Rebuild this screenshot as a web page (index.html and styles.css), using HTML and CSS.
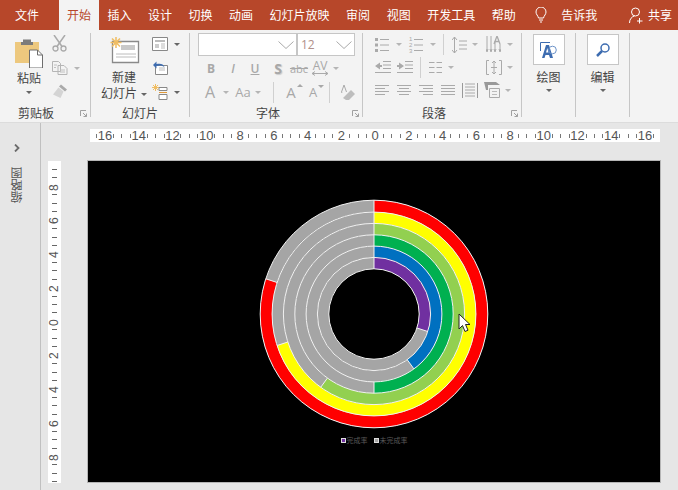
FILE: index.html
```html
<!DOCTYPE html>
<html lang="zh-CN">
<head>
  <meta charset="UTF-8">
  <title>PowerPoint</title>
  <link rel="stylesheet" href="styles.css">
</head>
<body>
  <svg class="defs" width="0" height="0">
    <symbol id="launcher" viewBox="0 0 7 7"><path d="M.5 6V.5H6M3 3l3.500 3.500M6.500 3.500v3h-3" stroke="#a0a0a0" fill="none"/></symbol>
  </svg>

  <div class="tabs">
    <div class="tab tab-file">文件</div>
    <div class="tab active">开始</div>
    <div class="tab">插入</div>
    <div class="tab">设计</div>
    <div class="tab">切换</div>
    <div class="tab">动画</div>
    <div class="tab">幻灯片放映</div>
    <div class="tab">审阅</div>
    <div class="tab">视图</div>
    <div class="tab">开发工具</div>
    <div class="tab">帮助</div>
    <div class="tell">
      <svg width="12" height="16" viewBox="0 0 12 16"><path d="M3.500 11C3 8.500 1 7.500 1 5a5 5 0 0 1 10 0c0 2.500-2 3.500-2.500 6zM4 13h4M5 15h2" fill="none" stroke="#fff"/></svg>
      <span>告诉我</span>
    </div>
    <div class="share">
      <svg width="15" height="17" viewBox="0 0 15 17"><circle cx="6.500" cy="5" r="4" fill="none" stroke="#fff"/><path d="M.5 16c0-4 2.500-6.500 5-7M10.500 11v5.500M8 14h5.500" fill="none" stroke="#fff"/></svg>
      <span>共享</span>
    </div>
  </div>

  <div class="ribbon">
    <div class="group g-clip">
      <div class="group-body clip-body">
        <div class="big-tool paste">
          <svg width="28" height="30" viewBox="0 0 28 30">
            <path d="M0 4h24v21H0z" fill="#edc87e"/>
            <path d="M8 4V1.500h8V4h2v3H6V4z" fill="#7b7b7b"/>
            <path d="M14.500 12h8l5 5v13h-13z" fill="#fff" stroke="#6e6e6e"/>
            <path d="M22.500 12v5h5" fill="none" stroke="#6e6e6e"/>
          </svg>
          <span class="big-label">粘贴</span>
          <i class="arr"></i>
        </div>
        <div class="clip-side">
          <svg width="15" height="17" viewBox="0 0 15 17"><circle cx="3.500" cy="13.500" r="2.500" fill="none" stroke="#aaa" stroke-width="1.300"/><circle cx="11.500" cy="13.500" r="2.500" fill="none" stroke="#aaa" stroke-width="1.300"/><path d="M2 0l8 11.500M13 0L5 11.500" stroke="#aaa" stroke-width="1.500"/></svg>
          <div class="with-arr">
            <svg width="16" height="14" viewBox="0 0 16 14"><path d="M.5.5h6l2 2v8h-8zM6 4.500h6l3 3v6H6z" fill="#f3f3f3" stroke="#b5b5b5"/><path d="M2 4h3M2 6.500h2M8 9h5M8 11h5" stroke="#c0c0c0"/></svg>
            <i class="arr light"></i>
          </div>
          <svg width="16" height="15" viewBox="0 0 16 15"><path d="M9 .5l6 5-2 2-6-5z" fill="#aaa"/><path d="M6.500 3.500l5 4-3 6.500-7.500-3.500z" fill="#d4d4d4"/></svg>
        </div>
      </div>
      <div class="group-label label-clip">剪贴板<svg class="launcher"><use href="#launcher"/></svg></div>
    </div>

    <div class="group g-slides">
      <div class="group-body slides-body">
        <div class="big-tool new-slide">
          <svg width="31" height="28" viewBox="0 0 31 28">
            <path d="M3.500 5.500h26v21h-26z" fill="#fff" stroke="#8a8a8a" stroke-width="1.300"/>
            <path d="M12 9h14v5H12z" fill="#c9c9c9"/>
            <path d="M7 18h20M7 21h20" stroke="#bcbcbc"/>
            <path d="M7 1v11M1.500 6.500h11M3 2.500l8 8M11 2.500l-8 8" stroke="#f0bd62" stroke-width="1.500"/>
          </svg>
          <span class="big-label">新建</span>
          <span class="big-label second">幻灯片<i class="arr inline"></i></span>
        </div>
        <div class="slides-side">
          <div class="with-arr">
            <svg width="16" height="14" viewBox="0 0 16 14"><path d="M.5.500h15v13H.5z" fill="#fff" stroke="#888"/><path d="M3 3h10v2H3z" fill="#bbb"/><path d="M3 7h4v4H3z" fill="#ccc"/><path d="M9 7h4M9 9h4M9 11h4" stroke="#bbb"/></svg>
            <i class="arr"></i>
          </div>
          <svg class="reset" width="16" height="15" viewBox="0 0 16 15"><path d="M3.500 5.500h12v9H3.500z" fill="#fff" stroke="#888"/><path d="M7 8h6M7 10h6" stroke="#bbb"/><path d="M1 5l3.500-3.500V4c4-1 7 0 8 3-2-1.500-4.500-2-8-1v2.500z" fill="#3d6cb0"/></svg>
          <div class="with-arr">
            <svg width="16" height="16" viewBox="0 0 16 16"><path d="M7 3.500h8v3H7zM7 10.500h8v5H7z" fill="#fff" stroke="#888"/><path d="M7 8.500h8" stroke="#e09a3a"/><path d="M3.500 0v7M0 3.500h7M1 1l5 5M6 1L1 6" stroke="#f0bd62"/></svg>
            <i class="arr"></i>
          </div>
        </div>
      </div>
      <div class="group-label">幻灯片</div>
    </div>

    <div class="group g-font">
      <div class="group-body font-body">
        <div class="font-boxes">
          <div class="combo combo-name"><svg width="16" height="8" viewBox="0 0 16 8"><path d="M.5.5L8 7.500 15.500.5" fill="none" stroke="#aaa"/></svg></div>
          <div class="combo combo-size"><span>12</span><svg width="16" height="8" viewBox="0 0 16 8"><path d="M.5.5L8 7.500 15.500.5" fill="none" stroke="#aaa"/></svg></div>
        </div>
        <div class="font-row row-style">
          <span class="glyph w-b">B</span>
          <span class="glyph w-i">I</span>
          <span class="glyph w-u">U</span>
          <span class="glyph w-s">S</span>
          <span class="glyph w-abc">abc</span>
          <span class="av"><b>AV</b><svg width="16" height="5" viewBox="0 0 16 5"><path d="M0 2.500h16M3 .5l-3 2 3 2M13 .5l3 2-3 2" fill="none" stroke="#aaa"/></svg></span>
          <i class="arr light"></i>
        </div>
        <div class="font-row row-size">
          <span class="glyph big-a">A</span><i class="arr light"></i>
          <span class="glyph case">Aa</span><i class="arr light"></i>
          <span class="v-sep sep-a"></span>
          <span class="glyph grow">A<em class="up"></em></span>
          <span class="glyph shrink">A<em class="down"></em></span>
          <span class="v-sep sep-b"></span>
          <svg class="eraser" width="15" height="17" viewBox="0 0 15 17"><path d="M2 9L1.500 8 4 1l2.500 7" fill="none" stroke="#aaa"/><path d="M3 14l8-8 4 4-6 6H6z" fill="#bdbdbd"/></svg>
        </div>
      </div>
      <div class="group-label label-font">字体<svg class="launcher"><use href="#launcher"/></svg></div>
    </div>

    <div class="group g-para">
      <div class="group-body para-body">
        <div class="para-row">
          <svg width="14" height="14" viewBox="0 0 14 14"><path d="M5 1.500h9M5 7h9M5 12.500h9" stroke="#aaa"/><path d="M0 0h3v3H0zM0 5.500h3v3H0zM0 11h3v3H0z" fill="#aaa"/></svg>
          <i class="arr light gap-7"></i>
          <span class="nums"><span>1<br>2<br>3</span><svg width="9" height="14" viewBox="0 0 9 14"><path d="M0 1.500h9M0 7h9M0 12.500h9" stroke="#aaa"/></svg></span>
          <i class="arr light gap-7"></i>
          <span class="v-sep sep-c"></span>
          <svg class="linesp" width="15" height="18" viewBox="0 0 15 18"><path d="M2.500 1v16M0 4l2.500-3L5 4M0 14l2.500 3L5 14" fill="none" stroke="#aaa"/><path d="M7 5h8M7 9h8M7 13h8" stroke="#aaa"/></svg>
          <i class="arr light gap-5"></i>
          <svg class="txtdir" width="15" height="17" viewBox="0 0 15 17"><path d="M1 0v15M5 0v15M9 5v10M0 13l1 3 1-3M4 13l1 3 1-3M8 13l1 3 1-3M14 8v7M13 13l1 3 1-3" fill="none" stroke="#aaa"/><path d="M8 8l3-8 3 8M9 5.500h4" fill="none" stroke="#aaa" stroke-width="1.300"/></svg>
          <i class="arr light gap-6"></i>
        </div>
        <div class="para-row">
          <svg width="16" height="12" viewBox="0 0 16 12"><path d="M8 .5h8M8 4h8M8 7.500h8M0 11.500h16" stroke="#aaa"/><path d="M0 5l5-3.500v2.500h2v2H5v2.500z" fill="#aaa"/></svg>
          <svg class="indent" width="16" height="12" viewBox="0 0 16 12"><path d="M8 .5h8M8 4h8M8 7.500h8M0 11.500h16" stroke="#aaa"/><path d="M7 5L2 1.500V4H0v2h2v2.500z" fill="#aaa"/></svg>
          <span class="v-sep sep-d"></span>
          <svg class="cols" width="13" height="11" viewBox="0 0 13 11"><path d="M0 .5h5.500M7.500.5H13M0 5.500h5.500M7.500 5.500H13M0 10.500h5.500M7.500 10.500H13" stroke="#aaa"/></svg>
          <i class="arr light gap-6"></i>
          <svg class="txtalign" width="16" height="15" viewBox="0 0 16 15"><path d="M3 .5H.5v14H3M13 .5h2.500v14H13M8 1v13M6 3l2-2 2 2M6 12l2 2 2-2M5 7.500h6" fill="none" stroke="#aaa"/></svg>
          <i class="arr light gap-5"></i>
        </div>
        <div class="para-row row-align">
          <svg width="14" height="10" viewBox="0 0 14 10"><path d="M0 .5h14M0 3.500h10M0 6.500h14M0 9.500h10" stroke="#aaa"/></svg>
          <svg class="al-next" width="14" height="10" viewBox="0 0 14 10"><path d="M0 .5h14M2 3.500h10M0 6.500h14M2 9.500h10" stroke="#aaa"/></svg>
          <svg class="al-next" width="14" height="10" viewBox="0 0 14 10"><path d="M0 .5h14M4 3.500h10M0 6.500h14M4 9.500h10" stroke="#aaa"/></svg>
          <svg class="al-next" width="14" height="10" viewBox="0 0 14 10"><path d="M0 .5h14M0 3.500h14M0 6.500h14M0 9.500h14" stroke="#aaa"/></svg>
          <svg class="dist" width="16" height="15" viewBox="0 0 16 15"><path d="M.5 0v15M15.500 0v15" stroke="#999"/><path d="M3 1h10M3 4h10M3 7h10M3 10h10M3 13h10" stroke="#aaa"/></svg>
          <svg class="smart" width="16" height="16" viewBox="0 0 16 16"><path d="M0 0h12l4 3H4v5H2z" fill="#999"/><path d="M5.500 6.500h10v9h-10z" fill="#f3f3f3" stroke="#aaa"/><path d="M8 9.500h5M8 12.500h5" stroke="#bbb"/></svg>
          <i class="arr light gap-5"></i>
        </div>
      </div>
      <div class="group-label label-font">段落<svg class="launcher"><use href="#launcher"/></svg></div>
    </div>

    <div class="group g-tool">
      <div class="tool-box">
        <svg width="17" height="16" viewBox="0 0 17 16"><path d="M10 .5H.5V9" fill="none" stroke="#3d6cb0"/><path d="M2 16L6 3h3l4 13h-3l-1-3H5.500l-1 3zM6 10.500h2.500L7.300 6z" fill="#3d6cb0" fill-rule="evenodd"/><circle cx="12.500" cy="8" r="3.800" fill="none" stroke="#6d93c9" stroke-width="1"/></svg>
      </div>
      <span class="big-label">绘图</span>
      <i class="arr"></i>
    </div>

    <div class="group g-tool">
      <div class="tool-box">
        <svg width="14" height="14" viewBox="0 0 14 14"><circle cx="9" cy="5" r="4" fill="none" stroke="#3d6cb0" stroke-width="1.500"/><path d="M6 8l-5 5" stroke="#3d6cb0" stroke-width="2.500"/></svg>
      </div>
      <span class="big-label">编辑</span>
      <i class="arr"></i>
    </div>
  </div>

  <div class="main">
    <div class="thumbs">
      <svg width="6" height="8" viewBox="0 0 6 8"><path d="M1 .5L4.500 4 1 7.500" fill="none" stroke="#6b6b6b" stroke-width="1.800"/></svg>
      <div class="thumbs-label">缩略图</div>
    </div>
    <div class="work">
      <div class="h-ruler">
        <span>16</span><span>14</span><span>12</span><span>10</span><span>8</span><span>6</span><span>4</span><span>2</span><span>0</span>
        <span>2</span><span>4</span><span>6</span><span>8</span><span>10</span><span>12</span><span>14</span><span>16</span>
      </div>
      <div class="stage">
        <div class="v-ruler">
          <span>8</span><span>6</span><span>4</span><span>2</span><span>0</span><span>2</span><span>4</span><span>6</span><span>8</span>
        </div>
        <div class="slide">
          <svg class="chart" width="232" height="232" viewBox="0 0 232 232">
            <g fill="none" stroke="#a5a5a5" stroke-width="11.600">
              <circle cx="116" cy="116" r="107.900"/>
              <circle cx="116" cy="116" r="96.300"/>
              <circle cx="116" cy="116" r="84.900"/>
              <circle cx="116" cy="116" r="73.500"/>
              <circle cx="116" cy="116" r="62.300"/>
              <circle cx="116" cy="116" r="50.900"/>
            </g>
            <g fill="none" stroke-width="11.600" transform="rotate(-90 116 116)">
              <circle cx="116" cy="116" r="107.900" stroke="#ff0000" pathLength="100" stroke-dasharray="80 20"/>
              <circle cx="116" cy="116" r="96.300" stroke="#ffff00" pathLength="100" stroke-dasharray="70 30"/>
              <circle cx="116" cy="116" r="84.900" stroke="#92d050" pathLength="100" stroke-dasharray="60 40"/>
              <circle cx="116" cy="116" r="73.500" stroke="#00b050" pathLength="100" stroke-dasharray="50 50"/>
              <circle cx="116" cy="116" r="62.300" stroke="#0070c0" pathLength="100" stroke-dasharray="40 60"/>
              <circle cx="116" cy="116" r="50.900" stroke="#7030a0" pathLength="100" stroke-dasharray="30 70"/>
            </g>
            <g fill="none" stroke="#f2f2f2" stroke-width="1">
              <circle cx="116" cy="116" r="113.800"/>
              <circle cx="116" cy="116" r="101.900"/>
              <circle cx="116" cy="116" r="90.600"/>
              <circle cx="116" cy="116" r="79.200"/>
              <circle cx="116" cy="116" r="67.900"/>
              <circle cx="116" cy="116" r="56.600"/>
              <circle cx="116" cy="116" r="45.200"/>
              <path d="M116 2.200V70.800M19.100 84.500L7.800 80.800M29.800 144L19.100 147.500M69.400 180.100L62.700 189.300M116 183.900V195.200M149.300 161.800L155.900 170.900M159 130L169.800 133.500"/>
            </g>
          </svg>
          <div class="legend">
            <i class="key key-done"></i><span>完成率</span>
            <i class="key key-todo"></i><span>未完成率</span>
          </div>
          <svg class="cursor" width="13" height="20" viewBox="0 0 13 20"><path d="M1 1v15l3.500-3.500L7 18.500l3-1.300-2.500-5.700h4.500z" fill="#fff" stroke="#222"/></svg>
        </div>
      </div>
    </div>
  </div>
</body>
</html>
```

FILE: styles.css
```css
:root {
  --tab-bar: #b7472a;
  --ribbon: #f3f3f3;
  --workspace: #e6e6e6;
  --divider: #c6c6c6;
  --disabled: #a8a8a8;
  --label: #444;
}

* {
  box-sizing: border-box;
}

html, body {
  margin: 0;
  height: 100%;
}

body {
  width: 678px;
  height: 490px;
  overflow: hidden;
  display: flex;
  flex-direction: column;
  background: var(--workspace);
  font-family: "Noto Sans CJK SC", "Liberation Sans", sans-serif;
  font-size: 12px;
  color: var(--label);
}

.defs {
  position: absolute;
}

/* tab bar */
.tabs {
  height: 30px;
  flex: none;
  display: flex;
  gap: 0.5px;
  background: var(--tab-bar);
  color: #fff;
  line-height: 30px;
}

.tab {
  padding: 0 8px;
}

.tab-file {
  padding: 0 19.5px 0 15px;
}

.tab.active {
  background: var(--ribbon);
  color: var(--tab-bar);
}

.tell {
  margin-left: 11px;
  display: flex;
  align-items: center;
  gap: 14px;
}

.share {
  margin-left: auto;
  padding-right: 6px;
  display: flex;
  align-items: center;
  gap: 4px;
}

/* ribbon */
.ribbon {
  height: 93px;
  flex: none;
  display: flex;
  padding: 3px 0 5px;
  background: var(--ribbon);
  border-bottom: 1px solid #dcdcdc;
}

.group {
  position: relative;
  display: flex;
  flex-direction: column;
  border-right: 1px solid var(--divider);
}

.group-body {
  height: 71px;
  flex: none;
}

.group-label {
  height: 14px;
  line-height: 18px;
  text-align: center;
}

.label-clip {
  padding-right: 18px;
}

.label-font {
  padding-right: 16px;
}

.launcher {
  position: absolute;
  right: 3px;
  bottom: 0;
  width: 7px;
  height: 7px;
}

.big-tool {
  display: flex;
  flex-direction: column;
  align-items: center;
}

.big-label {
  line-height: 16px;
  white-space: nowrap;
}

.arr {
  display: block;
  flex: none;
  width: 0;
  height: 0;
  border-left: 3px solid transparent;
  border-right: 3px solid transparent;
  border-top: 3px solid #666;
}

.arr.light {
  border-top-color: #b5b5b5;
}

.arr.inline {
  display: inline-block;
  margin-left: 4px;
  vertical-align: middle;
}

.with-arr {
  display: flex;
  align-items: center;
  gap: 6px;
}

.v-sep {
  width: 1px;
  height: 21px;
  flex: none;
  background: #d0d0d0;
}

/* clipboard */
.g-clip {
  width: 91px;
}

.clip-body {
  display: flex;
  padding: 5px 0 0 15px;
}

.paste .big-label {
  margin-top: 2px;
}

.paste .arr {
  margin-top: 5px;
}

.clip-side {
  margin: -3px 0 0 9px;
  display: flex;
  flex-direction: column;
  gap: 9px;
}

/* slides */
.g-slides {
  width: 99px;
}

.slides-body {
  display: flex;
  padding: 3px 0 0 10px;
}

.new-slide {
  width: 46px;
}

.new-slide .big-label {
  margin-top: 5px;
}

.new-slide .second {
  margin-top: 0;
}

.slides-side {
  margin-left: 5px;
  padding-top: 1px;
  display: flex;
  flex-direction: column;
  gap: 9px;
}

/* font */
.g-font {
  width: 173px;
}

.font-body {
  padding-left: 8px;
}

.font-boxes {
  display: flex;
  height: 23px;
}

.combo {
  height: 23px;
  display: flex;
  align-items: center;
  justify-content: flex-end;
  padding-right: 2px;
  background: #fff;
  border: 1px solid var(--divider);
}

.combo-name {
  width: 99px;
}

.combo-size {
  width: 58px;
  justify-content: space-between;
  padding-left: 3px;
  color: #b0908a;
  font-family: "Open Sans", sans-serif;
}

.font-row {
  display: flex;
  align-items: center;
  font-family: "Open Sans", "Liberation Sans", sans-serif;
  color: var(--disabled);
}

.row-style {
  height: 22px;
  margin-top: 1px;
  padding-left: 6px;
}

.row-size {
  height: 24px;
  margin-top: 1px;
  padding-left: 4px;
}

.glyph {
  position: relative;
  flex: none;
  text-align: center;
  font-weight: 600;
}

.w-b { width: 14px; font-weight: 700; }
.w-i { width: 14px; margin-left: 8px; font-style: italic; }
.w-u { width: 14px; margin-left: 8px; text-decoration: underline; }
.w-s { width: 14px; margin-left: 9px; font-size: 14px; font-weight: 700; text-shadow: 1px 1px 1px #ccc; }
.w-abc { width: 20px; margin-left: 4px; font-size: 11px; font-weight: 400; text-decoration: line-through; }

.av {
  margin-left: 3px;
  display: flex;
  flex-direction: column;
  align-items: center;
  line-height: 11px;
}

.av b {
  font-weight: 400;
  font-size: 12px;
}

.av + .arr {
  margin-left: 5px;
}

.big-a {
  width: 16px;
  font-size: 16px;
  font-weight: 400;
  margin-right: 5px;
}

.case {
  width: 18px;
  margin-left: 5px;
  margin-right: 3px;
  font-size: 13px;
  font-weight: 400;
}

.sep-a {
  margin-left: 12px;
}

.grow {
  width: 16px;
  margin-left: 9px;
  font-size: 15px;
  font-weight: 400;
}

.shrink {
  width: 14px;
  margin-left: 7px;
  font-size: 13px;
  font-weight: 400;
}

.up, .down {
  position: absolute;
  top: 2px;
  right: -4px;
  width: 0;
  height: 0;
  border-left: 3px solid transparent;
  border-right: 3px solid transparent;
}

.up {
  border-bottom: 3px solid var(--disabled);
}

.down {
  border-top: 3px solid var(--disabled);
}

.sep-b {
  margin-left: 9px;
}

.eraser {
  margin-left: 10px;
}

/* paragraph */
.g-para {
  width: 159px;
}

.para-body {
  padding-left: 12px;
  color: var(--disabled);
}

.para-row {
  height: 22px;
  display: flex;
  align-items: center;
}

.para-row:first-child {
  height: 23px;
}

.gap-5 { margin-left: 5px; }
.gap-6 { margin-left: 6px; }
.gap-7 { margin-left: 7px; }

.nums {
  margin-left: 7px;
  display: flex;
  align-items: center;
  gap: 2px;
  font-family: "Liberation Sans", sans-serif;
  font-size: 6px;
  line-height: 6px;
}

.sep-c { margin-left: 7px; }
.linesp { margin-left: 8px; }
.txtdir { margin-left: 8px; }
.indent { margin-left: 6px; }
.sep-d { margin-left: 7px; }
.cols { margin-left: 8px; }
.txtalign { margin-left: 32px; }
.row-align { margin-top: 1px; }
.al-next { margin-left: 8px; }
.dist { margin-left: 7px; }
.smart { margin-left: 6px; }

/* draw, edit */
.g-tool {
  width: 54px;
  align-items: center;
}

.tool-box {
  width: 32px;
  height: 31px;
  margin-top: 1px;
  display: flex;
  align-items: center;
  justify-content: center;
  background: #fff;
  border: 1px solid var(--divider);
}

.g-tool .big-label {
  margin-top: 4px;
}

.g-tool .arr {
  margin-top: 4px;
}

/* workspace */
.main {
  flex: 1;
  display: flex;
  min-height: 0;
}

.thumbs {
  width: 41px;
  flex: none;
  display: flex;
  flex-direction: column;
  align-items: center;
  padding: 21px 7px 0 0;
  border-right: 1px solid #c0c0c0;
}

.thumbs-label {
  margin-top: 15px;
  writing-mode: vertical-rl;
  transform: rotate(180deg);
  color: #555;
  line-height: 12px;
}

.work {
  flex: 1;
  display: flex;
  flex-direction: column;
  padding: 6px 0 0 7px;
}

.h-ruler {
  width: 570px;
  height: 13px;
  margin-left: 42px;
  display: flex;
  justify-content: center;
  background-color: #fff;
  background-image: repeating-linear-gradient(to right, #777 0, #777 1px, transparent 1px, transparent 8.44px);
  background-size: 100% 4px;
  background-repeat: no-repeat;
  background-position: 6.4px center;
  font-family: "Liberation Sans", sans-serif;
  font-size: 13px;
  line-height: 13px;
  color: #555;
}

.h-ruler span {
  width: 15px;
  margin: 0 9.38px;
  flex: none;
  display: flex;
  justify-content: center;
  background: #fff;
}

.stage {
  flex: 1;
  display: flex;
  margin-top: 18px;
}

.v-ruler {
  width: 13px;
  height: 322px;
  margin-top: 1px;
  flex: none;
  display: flex;
  flex-direction: column;
  align-items: center;
  justify-content: center;
  background-color: #fff;
  background-image: repeating-linear-gradient(to bottom, #666 0, #666 1px, transparent 1px, transparent 8.44px);
  background-size: 5px 100%;
  background-repeat: no-repeat;
  background-position: center 8px;
  font-family: "Liberation Sans", sans-serif;
  font-size: 12px;
  color: #555;
}

.v-ruler span {
  width: 13px;
  height: 11px;
  margin: 11.38px 0;
  flex: none;
  display: flex;
  align-items: center;
  justify-content: center;
  writing-mode: vertical-rl;
  transform: rotate(180deg);
  line-height: 13px;
  background: #fff;
}

.slide {
  position: relative;
  width: 574px;
  height: 323px;
  margin-left: 26px;
  flex: none;
  display: flex;
  flex-direction: column;
  align-items: center;
  padding-top: 37px;
  background: #000;
  border: 1px solid #b5b5b5;
}

.legend {
  margin-top: 6px;
  display: flex;
  align-items: center;
  font-size: 7px;
  line-height: 9px;
  color: #595959;
}

.key {
  width: 5px;
  height: 5px;
  margin-right: 1px;
  border: 1px solid #ddd;
}

.key-done {
  background: #7030a0;
}

.key-todo {
  margin-left: 6px;
  background: #a5a5a5;
}

.cursor {
  position: absolute;
  left: 370px;
  top: 152px;
}
```
